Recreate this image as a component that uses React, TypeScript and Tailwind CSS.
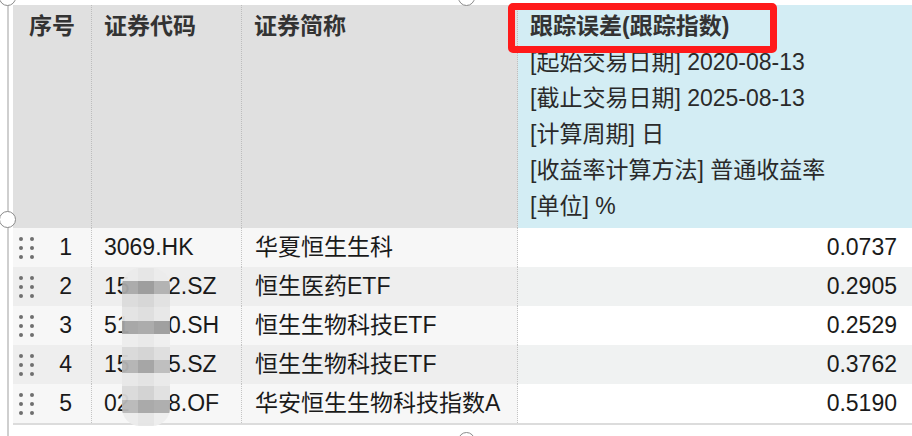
const font = { fontFamily: '"Liberation Sans", "Noto Sans CJK SC", sans-serif' };

const rows = [
  { no: 1, code: '3069.HK', name: '华夏恒生生科', value: '0.0737' },
  { no: 2, code: '15\u2007\u2007\u20072.SZ', name: '恒生医药ETF', value: '0.2905' },
  { no: 3, code: '51\u2007\u2007\u20070.SH', name: '恒生生物科技ETF', value: '0.2529' },
  { no: 4, code: '15\u2007\u2007\u20075.SZ', name: '恒生生物科技ETF', value: '0.3762' },
  { no: 5, code: '02\u2007\u2007\u20078.OF', name: '华安恒生生物科技指数A', value: '0.5190' },
];

const infoLines = [
  '[起始交易日期] 2020-08-13',
  '[截止交易日期] 2025-08-13',
  '[计算周期] 日',
  '[收益率计算方法] 普通收益率',
  '[单位] %',
];

// mosaic blocks over the hidden codes, 3 per line
const mosaic = [
  ['#ebebeb', '#e6e6e6', '#ececec'],
  ['#a9a9a9', '#9a9a9a', '#b0b0b0'],
  ['#dcdcdc', '#d6d6d6', '#e2e2e2'],
  ['#e4e4e4', '#dedede', '#e8e8e8'],
  ['#a4a4a4', '#a8a8a8', '#9c9c9c'],
  ['#ededed', '#e9e9e9', '#efefef'],
  ['#d9d9d9', '#d4d4d4', '#dfdfdf'],
  ['#b4b4b4', '#a3a3a3', '#bdbdbd'],
  ['#e8e8e8', '#e3e3e3', '#eaeaea'],
  ['#dadada', '#d2d2d2', '#e0e0e0'],
  ['#b8b8b8', '#a6a6a6', '#acacac'],
  ['#ececec', '#e6e6e6', '#eeeeee'],
];

function DragDots() {
  return (
    <div className="grid grid-cols-2 gap-x-[7px] gap-y-[5px]">
      {Array.from({ length: 6 }).map((_, i) => (
        <span key={i} className="h-[4px] w-[4px] rounded-full bg-[#6f6f6f]" />
      ))}
    </div>
  );
}

function Handle({ className }: { className: string }) {
  return (
    <div
      className={`absolute h-[17px] w-[17px] rounded-full border-[1.5px] border-[#8a8a8a] bg-white ${className}`}
    />
  );
}

export default function App() {
  return (
    <div className="relative h-[436px] w-[912px] overflow-hidden bg-white" style={font}>
      {/* selection frame line */}
      <div className="absolute left-[7px] top-0 h-[436px] w-[2px] bg-[#cfcfcf]" />

      <div className="ml-[13px] pt-[5px]">
        {/* header */}
        <div className="grid h-[223px] grid-cols-[79px_150px_276px_1fr] text-[23px] font-bold leading-[36px] text-[#333]">
          <div className="border-r border-dotted border-[#bdbdbd] bg-[#e0e0e0] pt-[3px] text-center">序号</div>
          <div className="border-r border-dotted border-[#bdbdbd] bg-[#e0e0e0] pl-[12px] pt-[3px]">证券代码</div>
          <div className="border-r border-dotted border-[#bdbdbd] bg-[#e0e0e0] pl-[12px] pt-[3px]">证券简称</div>
          <div className="bg-[#d3edf4] pl-[12px] pt-[3px]">
            <div>跟踪误差(跟踪指数)</div>
            {infoLines.map((line) => (
              <div key={line} className="font-normal text-[#2a2a2a]">
                {line}
              </div>
            ))}
          </div>
        </div>

        {/* body */}
        <div className="border-b-2 border-[#dcdcdc] text-[23px] text-[#1a1a1a]">
          {rows.map((r, i) => {
            const even = i % 2 === 1;
            const left = even ? 'bg-[#eeeeee]' : 'bg-[#f7f7f7]';
            const right = even ? 'bg-[#f0f2f2]' : 'bg-white';
            return (
              <div key={r.no} className="grid h-[39px] grid-cols-[79px_150px_276px_1fr] items-stretch">
                <div className={`flex items-center justify-between border-r border-dotted border-[#c4c4c4] pl-[6px] pr-[19px] ${left}`}>
                  <DragDots />
                  <span>{r.no}</span>
                </div>
                <div className={`flex items-center whitespace-pre border-r border-dotted border-[#c4c4c4] pl-[12px] ${left}`}>
                  {r.code}
                </div>
                <div className={`flex items-center border-r border-dotted border-[#c4c4c4] pl-[13px] ${left}`}>
                  {r.name}
                </div>
                <div className={`flex items-center justify-end pr-[15px] ${right}`}>{r.value}</div>
              </div>
            );
          })}
        </div>
      </div>

      {/* mosaic over codes */}
      <div className="absolute left-[122px] top-[268px] grid h-[158px] w-[48px] grid-cols-3 overflow-hidden rounded-[18px] opacity-95">
        {mosaic.flat().map((c, i) => (
          <div key={i} style={{ backgroundColor: c }} />
        ))}
      </div>

      {/* red highlight */}
      <div className="absolute left-[508px] top-[3px] h-[50px] w-[269px] rounded-[5px] border-[7px] border-[#ff1a1a]" />

      <Handle className="left-[-1px] top-[-11px]" />
      <Handle className="left-[-1px] top-[211px]" />
      <Handle className="left-[458px] top-[-11px]" />
      <Handle className="left-[458px] top-[432px]" />
    </div>
  );
}
